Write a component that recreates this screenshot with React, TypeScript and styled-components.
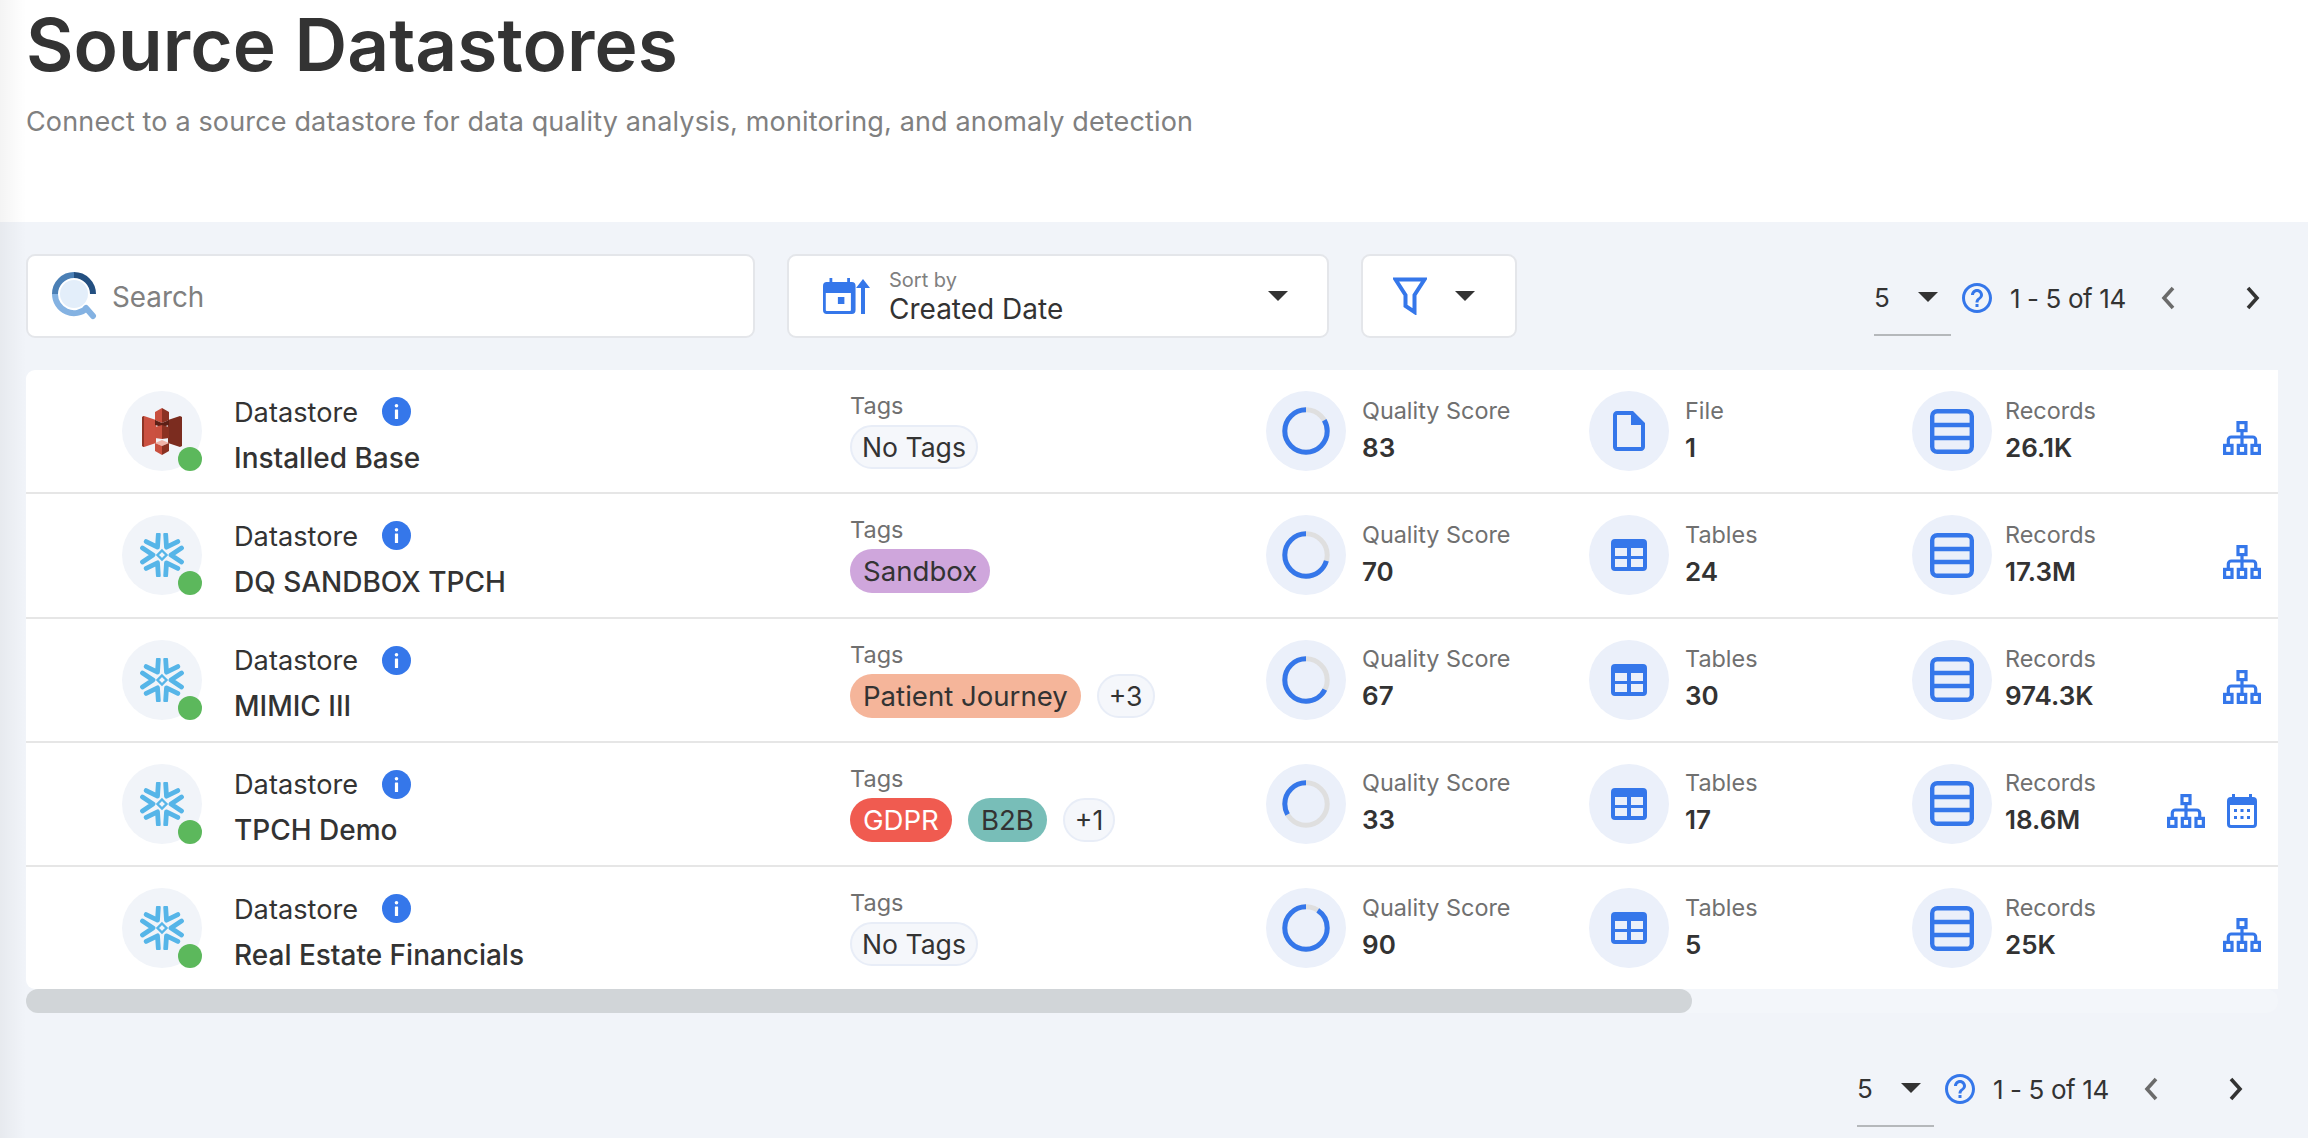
import styled, { createGlobalStyle } from "styled-components";
import { MdHelpOutline } from "react-icons/md";

const blue = "#3577ea";

const GlobalStyle = createGlobalStyle`
  html, body {
    margin: 0;
    padding: 0;
    background: #f1f4f9;
    font-family: Inter, "Noto Sans", sans-serif;
    color: #333;
  }
  * { box-sizing: border-box; }
`;

type Tag = { label: string; bg: string; color?: string };
type Item = {
  source: "s3" | "snowflake";
  name: string;
  tags: Tag[];
  more?: string;
  score: number;
  kind: string;
  count: string;
  records: string;
  schedule?: boolean;
};

const items: Item[] = [
  { source: "s3", name: "Installed Base", tags: [], score: 83, kind: "File", count: "1", records: "26.1K" },
  {
    source: "snowflake",
    name: "DQ SANDBOX TPCH",
    tags: [{ label: "Sandbox", bg: "#cfa6dc" }],
    score: 70,
    kind: "Tables",
    count: "24",
    records: "17.3M",
  },
  {
    source: "snowflake",
    name: "MIMIC III",
    tags: [{ label: "Patient Journey", bg: "#f5b59a" }],
    more: "+3",
    score: 67,
    kind: "Tables",
    count: "30",
    records: "974.3K",
  },
  {
    source: "snowflake",
    name: "TPCH Demo",
    tags: [
      { label: "GDPR", bg: "#f05b50", color: "#fff" },
      { label: "B2B", bg: "#78beb8" },
    ],
    more: "+1",
    score: 33,
    kind: "Tables",
    count: "17",
    records: "18.6M",
    schedule: true,
  },
  { source: "snowflake", name: "Real Estate Financials", tags: [], score: 90, kind: "Tables", count: "5", records: "25K" },
];

const SearchLogo = () => (
  <svg width="46" height="48" viewBox="0 0 46 48" fill="none">
    <circle cx="22" cy="22" r="14" fill="#e3eefa" />
    <path d="M22 3a19 19 0 0 1 19 19" stroke="#234f80" strokeWidth="6" />
    <path d="M3 22A19 19 0 0 1 22 3" stroke="#4a7fb5" strokeWidth="6" />
    <path d="M3 22a19 19 0 0 0 32 14" stroke="#84b2e2" strokeWidth="6" />
    <path d="M34 36l7 8" stroke="#84b2e2" strokeWidth="6" strokeLinecap="round" />
  </svg>
);

const SortIcon = () => (
  <svg width="47" height="36" viewBox="0 0 47 36">
    <path
      fill={blue}
      fillRule="evenodd"
      d="M7 0h3v4h16V0h3v4h2a4 4 0 0 1 4 4v24a4 4 0 0 1-4 4H4a4 4 0 0 1-4-4V8a4 4 0 0 1 4-4h3zM3 15v17a1 1 0 0 0 1 1h25a1 1 0 0 0 1-1V15zm13 4h7v7h-7z"
      transform="scale(0.93 1)"
    />
    <path fill={blue} d="M38 36V10h-5l7-9 7 9h-5v26z" />
  </svg>
);

const FilterIcon = () => (
  <svg width="34" height="38" viewBox="0 0 34 38" fill="none">
    <path d="M2.5 2.5h29L21.5 18v17l-9-6V18z" stroke={blue} strokeWidth="4" />
  </svg>
);

const SnowflakeLogo = () => (
  <svg width="44" height="44" viewBox="-22 -22 44 44" fill="none">
    {[0, 60, 120, 180, 240, 300].map((a) => (
      <path
        key={a}
        transform={`rotate(${a})`}
        d="M-19.5 -7L-9 0L-19.5 7"
        stroke="#56b5e8"
        strokeWidth="4.8"
        strokeLinecap="round"
        strokeLinejoin="round"
      />
    ))}
    <path d="M0 -4.5L4.5 0L0 4.5L-4.5 0z" stroke="#56b5e8" strokeWidth="2.4" />
  </svg>
);

const S3Logo = () => (
  <svg width="40" height="47" viewBox="0 0 40 47">
    <path fill="#cb5141" d="M0 9l2-1 12 4v23L2 39l-2-1z" />
    <path fill="#7b2c1f" d="M40 9l-2-1-12 4v23l12 4 2-1z" />
    <path fill="#8f3526" d="M0 9l2-1v31l-2-1z" />
    <path fill="#c9503f" d="M13 4l7-4v15l-7-3z" />
    <path fill="#8b3122" d="M27 4l-7-4v15l7-3z" />
    <path fill="#5e1f15" d="M13 12l7 3 7-3v5l-7 2-7-2z" />
    <path fill="#c9503f" d="M13 19l7-2v14l-7-1z" />
    <path fill="#8b3122" d="M27 19l-7-2v14l7-1z" />
    <path fill="#f0b3a8" d="M13 35l7-3 7 3-7 3z" />
    <path fill="#c9503f" d="M13 35l7 3v9l-7-4z" />
    <path fill="#8b3122" d="M27 35l-7 3v9l7-4z" />
  </svg>
);

const InfoIcon = () => (
  <svg width="29" height="29" viewBox="0 0 29 29">
    <circle cx="14.5" cy="14.5" r="14.5" fill={blue} />
    <rect x="12.7" y="7" width="3.6" height="3.6" rx="1.8" fill="#fff" />
    <rect x="12.9" y="12.4" width="3.2" height="9.6" rx="0.6" fill="#fff" />
  </svg>
);

const ScoreRing = ({ score }: { score: number }) => {
  const r = 21.2;
  const c = 2 * Math.PI * r;
  return (
    <svg width="48" height="48" viewBox="0 0 48 48" fill="none">
      <circle cx="24" cy="24" r={r} stroke="#dfdfdf" strokeWidth="5" />
      <circle
        cx="24"
        cy="24"
        r={r}
        stroke={blue}
        strokeWidth="5"
        strokeDasharray={`${(c * score) / 100} ${c}`}
        transform="rotate(-90 24 24) scale(1 -1) translate(0 -48)"
      />
    </svg>
  );
};

const FileIcon = () => (
  <svg width="48" height="48" viewBox="0 0 24 24" fill={blue}>
    <path d="M14 2H6c-1.1 0-1.99.9-1.99 2L4 20c0 1.1.89 2 1.99 2H18c1.1 0 2-.9 2-2V8l-6-6zM6 20V4h7v5h5v11H6z" />
  </svg>
);

const TableIcon = () => (
  <svg width="36" height="32" viewBox="0 0 36 32">
    <path
      fill={blue}
      fillRule="evenodd"
      d="M4 0h28a4 4 0 0 1 4 4v24a4 4 0 0 1-4 4H4a4 4 0 0 1-4-4V4a4 4 0 0 1 4-4zm0 9v8h12V9zm16 0v8h12V9zM4 20v8h12v-8zm16 0v8h12v-8z"
    />
  </svg>
);

const RecordsIcon = () => (
  <svg width="44" height="45" viewBox="0 0 44 45" fill="none">
    <rect x="2.2" y="2.2" width="39.6" height="40.6" rx="5" stroke={blue} strokeWidth="4.4" />
    <path d="M2 16h40M2 29h40" stroke={blue} strokeWidth="4.4" />
  </svg>
);

const HierarchyIcon = () => (
  <svg width="38" height="34" viewBox="0 0 38 34" fill="none" stroke={blue} strokeWidth="3.2">
    <rect x="15" y="1.6" width="8" height="8" />
    <rect x="1.6" y="24.4" width="7.4" height="8" />
    <rect x="15.3" y="24.4" width="7.4" height="8" />
    <rect x="29" y="24.4" width="7.4" height="8" />
    <path d="M19 9.6V24.4M5.3 24.4V19a3 3 0 0 1 3-3H29.7a3 3 0 0 1 3 3v5.4" />
  </svg>
);

const CalendarIcon = () => (
  <svg width="30" height="34" viewBox="0 0 30 34">
    <path
      fill={blue}
      fillRule="evenodd"
      d="M5 0h3v3h14V0h3v3h1a4 4 0 0 1 4 4v23a4 4 0 0 1-4 4H4a4 4 0 0 1-4-4V7a4 4 0 0 1 4-4h1zM3 11v19a1 1 0 0 0 1 1h22a1 1 0 0 0 1-1V11zm4 4h3v3H7zm6.5 0h3v3h-3zM20 15h3v3h-3zM7 22h3v3H7zm6.5 0h3v3h-3zm6.5 0h3v3h-3z"
    />
  </svg>
);

const Pager = ({ bottom }: { bottom?: boolean }) => (
  <PagerBar $bottom={bottom}>
    <PageSize>
      <span>5</span>
      <Caret />
    </PageSize>
    <HelpIcon />
    <PageRange>1 - 5 of 14</PageRange>
    <PagerArrows>
      <Chevron width="16" height="26" viewBox="0 0 16 26" fill="none">
        <path d="M13 3L4 13l9 10" stroke="#6b6b6b" strokeWidth="3.6" />
      </Chevron>
      <Chevron width="16" height="26" viewBox="0 0 16 26" fill="none">
        <path d="M3 3l9 10-9 10" stroke="#333" strokeWidth="3.6" />
      </Chevron>
    </PagerArrows>
  </PagerBar>
);

const Row = ({ item }: { item: Item }) => (
  <RowBox>
    <SourceCell>
      <LogoCircle>
        {item.source === "s3" ? <S3Logo /> : <SnowflakeLogo />}
        <StatusDot />
      </LogoCircle>
      <NameBlock>
        <TypeLine>
          <span>Datastore</span>
          <InfoIcon />
        </TypeLine>
        <Name>{item.name}</Name>
      </NameBlock>
    </SourceCell>
    <TagsCell>
      <TagsLabel>Tags</TagsLabel>
      <TagList>
        {item.tags.length === 0 && <MutedPill>No Tags</MutedPill>}
        {item.tags.map((t) => (
          <TagPill key={t.label} $bg={t.bg} $color={t.color}>
            {t.label}
          </TagPill>
        ))}
        {item.more && <MutedPill>{item.more}</MutedPill>}
      </TagList>
    </TagsCell>
    <Stat>
      <StatCircle>
        <ScoreRing score={item.score} />
      </StatCircle>
      <StatText>
        <StatLabel>Quality Score</StatLabel>
        <StatValue>{item.score}</StatValue>
      </StatText>
    </Stat>
    <Stat>
      <StatCircle>{item.kind === "File" ? <FileIcon /> : <TableIcon />}</StatCircle>
      <StatText>
        <StatLabel>{item.kind}</StatLabel>
        <StatValue>{item.count}</StatValue>
      </StatText>
    </Stat>
    <Stat $gap={13}>
      <StatCircle>
        <RecordsIcon />
      </StatCircle>
      <StatText>
        <StatLabel>Records</StatLabel>
        <StatValue>{item.records}</StatValue>
      </StatText>
    </Stat>
    <Actions $schedule={item.schedule}>
      <HierarchyIcon />
      {item.schedule && <CalendarIcon />}
    </Actions>
  </RowBox>
);

const App = () => {
  return (
    <Page>
      <GlobalStyle />
      <Header>
        <Title>Source Datastores</Title>
        <Subtitle>Connect to a source datastore for data quality analysis, monitoring, and anomaly detection</Subtitle>
      </Header>
      <Content>
        <Toolbar>
          <SearchBox>
            <SearchLogo />
            <span>Search</span>
          </SearchBox>
          <SortBox>
            <SortIcon />
            <SortText>
              <small>Sort by</small>
              <span>Created Date</span>
            </SortText>
            <SortCaret />
          </SortBox>
          <FilterBox>
            <FilterIcon />
            <Caret />
          </FilterBox>
          <Pager />
        </Toolbar>
        <Table>
          {items.map((item) => (
            <Row key={item.name} item={item} />
          ))}
        </Table>
        <ScrollTrack>
          <ScrollThumb />
        </ScrollTrack>
        <Pager bottom />
      </Content>
    </Page>
  );
};

export default App;

const Page = styled.div`
  width: 2308px;
  height: 1138px;
  overflow: hidden;
  position: relative;

  &::after {
    content: "";
    position: absolute;
    inset: 0;
    width: 26px;
    background: linear-gradient(90deg, rgba(0, 0, 0, 0.045), rgba(0, 0, 0, 0));
    pointer-events: none;
  }
`;

const Header = styled.header`
  height: 222px;
  background: #fff;
  padding: 0 26px;
`;

const Title = styled.h1`
  margin: 0;
  padding-top: 6px;
  font-size: 73px;
  line-height: 78px;
  font-weight: 600;
  color: #333;
  letter-spacing: 0.05px;
`;

const Subtitle = styled.p`
  margin: 0;
  padding-top: 20px;
  font-size: 27px;
  line-height: 36px;
  font-weight: 400;
  color: #808080;
  letter-spacing: 0.15px;
`;

const Content = styled.main`
  padding: 32px 30px 0 26px;
  height: 916px;
`;

const Toolbar = styled.div`
  display: flex;
  align-items: flex-start;
  height: 84px;
  margin-bottom: 32px;
`;

const InputBox = styled.div`
  height: 84px;
  background: #fff;
  border: 2px solid #e4e6ea;
  border-radius: 9px;
  display: flex;
  align-items: center;
`;

const SearchBox = styled(InputBox)`
  width: 729px;
  padding-left: 24px;
  gap: 14px;
  font-size: 27.8px;
  color: #808080;

  span {
    margin-top: 2px;
  }
`;

const SortBox = styled(InputBox)`
  width: 542px;
  margin-left: 32px;
  padding: 0 39px 0 34px;
`;

const SortText = styled.div`
  display: flex;
  flex-direction: column;
  flex: 1;
  margin-left: 19px;
  margin-top: 2px;
  font-size: 28px;
  line-height: 31px;
  color: #333;

  small {
    font-size: 20px;
    line-height: 23px;
    color: #808080;
  }

  span {
    margin-top: 2px;
  }
`;

const FilterBox = styled(InputBox)`
  width: 156px;
  margin-left: 32px;
  padding-left: 30px;
  gap: 28px;
`;

const Caret = styled.i`
  display: block;
  width: 0;
  height: 0;
  border-left: 10px solid transparent;
  border-right: 10px solid transparent;
  border-top: 10px solid #333;
`;

const SortCaret = styled(Caret)`
  flex: none;
`;

const PagerBar = styled.div<{ $bottom?: boolean }>`
  display: flex;
  align-items: center;
  height: 84px;
  margin-left: ${(p) => (p.$bottom ? "1831px" : "357px")};
  margin-top: ${(p) => (p.$bottom ? "32px" : "0")};
  font-size: 26px;
  color: #333;
`;

const PageSize = styled.div`
  position: relative;
  width: 77px;
  height: 80px;
  display: flex;
  align-items: center;
  gap: 28px;
  padding-top: 4px;
  border-bottom: 2px solid #b5b8bb;
`;

const HelpIcon = styled(MdHelpOutline)`
  width: 36px;
  height: 36px;
  color: ${blue};
  margin-left: 8px;
  margin-top: 4px;
`;

const PageRange = styled.span`
  margin-left: 15px;
  margin-top: 4px;
  width: 116px;
  white-space: nowrap;
  letter-spacing: -0.4px;
`;

const PagerArrows = styled.div`
  display: flex;
  align-items: center;
  gap: 69px;
  margin-left: 34px;
  margin-top: 4px;
`;

const Chevron = styled.svg`
  display: block;
`;

const Table = styled.section`
  width: 2252px;
  background: #fff;
  border-radius: 9px 0 0 9px;
`;

const RowBox = styled.div`
  height: 124.25px;
  padding: 0 17px 0 96px;
  display: grid;
  grid-template-columns: 728px 416px 323px 323px 1fr auto;
  align-items: center;
  border-bottom: 2px solid #e6e6e6;

  &:last-child {
    height: 122.25px;
    border-bottom: none;
  }
`;

const SourceCell = styled.div`
  display: flex;
  align-items: center;
  gap: 32px;
`;

const LogoCircle = styled.div`
  position: relative;
  width: 80px;
  height: 80px;
  border-radius: 50%;
  background: #f1f4f9;
  display: flex;
  align-items: center;
  justify-content: center;
`;

const StatusDot = styled.span`
  position: absolute;
  right: 0;
  bottom: 0;
  width: 24px;
  height: 24px;
  border-radius: 50%;
  background: #5cb85c;
`;

const NameBlock = styled.div`
  display: flex;
  flex-direction: column;
  gap: 11px;
  margin-top: 8px;
`;

const TypeLine = styled.div`
  display: flex;
  align-items: center;
  gap: 24px;
  font-size: 27.2px;
  line-height: 34px;
  color: #333;

  svg {
    margin-top: -2px;
  }
`;

const Name = styled.div`
  font-size: 28px;
  line-height: 34px;
  font-weight: 500;
  color: #333;
`;

const TagsCell = styled.div`
  display: flex;
  flex-direction: column;
  gap: 5px;
  margin-top: -1px;
`;

const TagsLabel = styled.div`
  font-size: 23.5px;
  line-height: 28px;
  color: #707070;
`;

const TagList = styled.div`
  display: flex;
  gap: 16px;
`;

const TagPill = styled.span<{ $bg: string; $color?: string }>`
  height: 44px;
  padding: 0 13px;
  border-radius: 22px;
  display: flex;
  align-items: center;
  font-size: 27.6px;
  white-space: nowrap;
  background: ${(p) => p.$bg};
  color: ${(p) => p.$color || "#333"};
`;

const MutedPill = styled.span`
  height: 44px;
  padding: 0 10px;
  border-radius: 22px;
  display: flex;
  align-items: center;
  font-size: 26.6px;
  white-space: nowrap;
  background: #f5f7fb;
  border: 2px solid #e8edf7;
  color: #333;
`;

const Stat = styled.div<{ $gap?: number }>`
  display: flex;
  align-items: center;
  gap: ${(p) => p.$gap ?? 16}px;
`;

const StatCircle = styled.div`
  width: 80px;
  height: 80px;
  flex: none;
  border-radius: 50%;
  background: #ebf0fa;
  display: flex;
  align-items: center;
  justify-content: center;
`;

const StatText = styled.div`
  margin-top: -1px;
`;

const StatLabel = styled.div`
  font-size: 23.4px;
  line-height: 28px;
  color: #707070;
  white-space: nowrap;
`;

const StatValue = styled.div`
  font-size: 26px;
  line-height: 34px;
  font-weight: 600;
  margin-top: 6px;
  color: #333;
`;

const Actions = styled.div<{ $schedule?: boolean }>`
  grid-column: 6;
  display: flex;
  align-items: flex-start;
  gap: 22px;
  margin-top: 14px;
  margin-right: ${(p) => (p.$schedule ? "4px" : "0")};
`;

const ScrollTrack = styled.div`
  width: 2252px;
  height: 24px;
  border-radius: 12px;
  background: #f3f6fa;
`;

const ScrollThumb = styled.div`
  width: 1666px;
  height: 24px;
  border-radius: 12px;
  background: #d1d5d8;
`;
